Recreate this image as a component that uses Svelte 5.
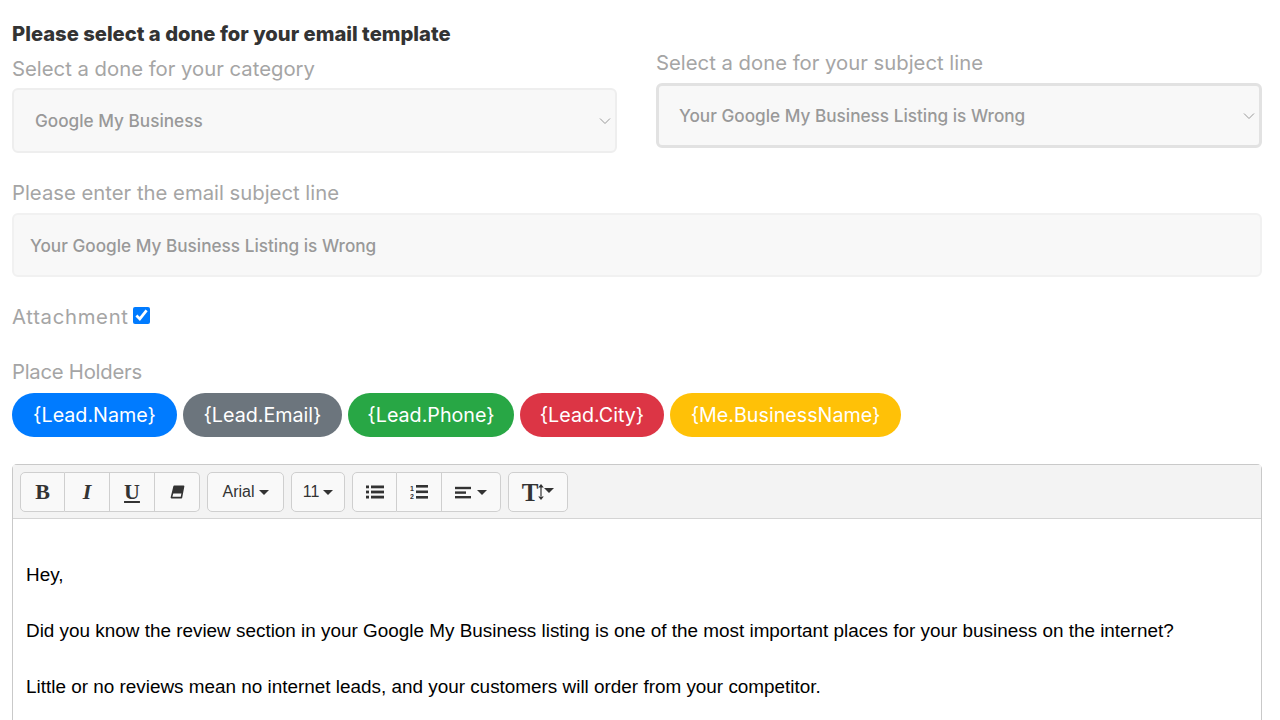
<script>
  const pills = [
    { text: '{Lead.Name}', color: 'blue' },
    { text: '{Lead.Email}', color: 'gray' },
    { text: '{Lead.Phone}', color: 'green' },
    { text: '{Lead.City}', color: 'red' },
    { text: '{Me.BusinessName}', color: 'yellow' }
  ]
  const body = [
    'Hey,',
    'Did you know the review section in your Google My Business listing is one of the most important places for your business on the internet?',
    'Little or no reviews mean no internet leads, and your customers will order from your competitor.'
  ]
</script>

<div class="page">
  <div class="selects">
    <div class="col">
      <h1>Please select a done for your email template</h1>
      <div class="label">Select a done for your category</div>
      <div class="select">
        <span>Google My Business</span>
        <svg width="12" height="8" viewBox="0 0 12 8"><path d="M1 1.5l5 5 5-5" fill="none" stroke="#999" stroke-width="1"/></svg>
      </div>
    </div>
    <div class="col right">
      <div class="label">Select a done for your subject line</div>
      <div class="select focused">
        <span>Your Google My Business Listing is Wrong</span>
        <svg width="12" height="8" viewBox="0 0 12 8"><path d="M1 1.5l5 5 5-5" fill="none" stroke="#999" stroke-width="1"/></svg>
      </div>
    </div>
  </div>

  <div class="label subject">Please enter the email subject line</div>
  <input class="text" type="text" value="Your Google My Business Listing is Wrong" />

  <div class="attach">
    <span class="label">Attachment</span>
    <input type="checkbox" checked />
  </div>

  <div class="label holders">Place Holders</div>
  <div class="pills">
    {#each pills as pill}
      <span class="pill {pill.color}">{pill.text}</span>
    {/each}
  </div>

  <div class="editor">
    <div class="toolbar">
      <div class="group">
        <button class="b"><b>B</b></button>
        <button class="b"><b><i>I</i></b></button>
        <button class="b"><b><u>U</u></b></button>
        <button class="b">
          <svg width="15" height="14" viewBox="0 0 15 14"><path d="M4.2 1.2h9.4L12 8.4H2.6z" fill="#333"/><path d="M4.2 1.2h9.4L11.4 12.6H1.4z" fill="none" stroke="#333" stroke-width="1.6" stroke-linejoin="round"/></svg>
        </button>
      </div>
      <div class="group"><button class="drop name">Arial<span class="caret"></span></button></div>
      <div class="group"><button class="drop size">11<span class="caret"></span></button></div>
      <div class="group">
        <button class="b">
          <svg width="18" height="14" viewBox="0 0 18 14" fill="#333"><rect x="0" y="0.5" width="3" height="2.8"/><rect x="5" y="0.5" width="13" height="2.8"/><rect x="0" y="5.6" width="3" height="2.8"/><rect x="5" y="5.6" width="13" height="2.8"/><rect x="0" y="10.7" width="3" height="2.8"/><rect x="5" y="10.7" width="13" height="2.8"/></svg>
        </button>
        <button class="b">
          <svg width="18" height="16" viewBox="0 0 18 16" fill="#333"><rect x="6" y="1" width="12" height="2.6"/><rect x="6" y="6.5" width="12" height="2.6"/><rect x="6" y="12" width="12" height="2.6"/><text x="0" y="6.5" class="num">1</text><text x="0" y="15" class="num">2</text></svg>
        </button>
        <button class="b wide">
          <svg width="17" height="13" viewBox="0 0 17 13" fill="#333"><rect x="0" y="0.8" width="16" height="2.4"/><rect x="0" y="5.4" width="11" height="2.4"/><rect x="0" y="10" width="16" height="2.4"/></svg>
          <span class="caret"></span>
        </button>
      </div>
      <div class="group">
        <button class="b height"><b>T</b><svg width="6" height="16" viewBox="0 0 6 16" fill="#333"><path d="M3 0l2.8 3.6H.2zM3 16l2.8-3.6H.2zM2.4 3h1.2v10H2.4z"/></svg><span class="caret tight"></span></button>
      </div>
    </div>
    <div class="content">
      {#each body as line}
        <p>{line}</p>
      {/each}
    </div>
  </div>
</div>

<style>
  :global(body) {
    background: #fff;
    overflow: hidden;
  }
  .page {
    height: 720px;
    overflow: hidden;
    box-sizing: border-box;
    padding: 22px 18px 0 12px;
    font-family: Inter, "Open Sans", sans-serif;
  }
  .selects {
    display: grid;
    grid-template-columns: 605px 606px;
    column-gap: 39px;
  }
  .right {
    padding-top: 29px;
  }
  h1 {
    margin: 0 0 11px;
    font-size: 20.2px;
    line-height: 24px;
    font-weight: 800;
    color: #333;
    white-space: nowrap;
  }
  .label {
    font-size: 20.3px;
    line-height: 24px;
    color: #a5a5a5;
  }
  .select {
    box-sizing: border-box;
    height: 65px;
    margin-top: 7px;
    padding: 0 4px 0 21px;
    display: flex;
    align-items: center;
    justify-content: space-between;
    background: #f8f8f8;
    border: 2px solid #eee;
    border-radius: 6px;
    font-size: 17.2px;
    font-weight: 500;
    color: #999;
  }
  .select.focused {
    margin-top: 8px;
    height: 65px;
    border: 3px solid #e2e2e2;
    padding-left: 20px;
    padding-right: 4px;
  }
  .subject {
    margin-top: 28px;
  }
  .text {
    display: block;
    box-sizing: border-box;
    width: 100%;
    height: 64px;
    margin-top: 8px;
    padding: 0 16px;
    background: #f8f8f8;
    border: 2px solid #f1f1f1;
    border-radius: 6px;
    font: 500 17.2px Inter, "Open Sans", sans-serif;
    color: #999;
    outline: none;
  }
  .attach {
    display: flex;
    align-items: center;
    gap: 4px;
    margin-top: 28px;
  }
  .attach .label {
    letter-spacing: 0.7px;
  }
  .attach input {
    width: 17px;
    height: 17px;
    margin: 0 0 3px;
    accent-color: #007bff;
  }
  .holders {
    margin-top: 31px;
    letter-spacing: -0.25px;
  }
  .pills {
    display: flex;
    gap: 6px;
    margin-top: 9px;
  }
  .pill {
    box-sizing: border-box;
    height: 44px;
    display: flex;
    align-items: center;
    justify-content: center;
    border-radius: 22px;
    font-size: 19.7px;
    color: #fff;
    white-space: nowrap;
  }
  .blue { width: 165px; background: #007bff; }
  .gray { width: 159px; background: #6c757d; }
  .green { width: 166px; background: #28a745; }
  .red { width: 144px; background: #dc3545; }
  .yellow { width: 231px; background: #ffc107; }
  .editor {
    margin-top: 27px;
    border: 1px solid #c9c9c9;
    border-bottom: none;
    border-radius: 5px 5px 0 0;
    font-family: "Liberation Sans", Arial, sans-serif;
    color: #000;
  }
  .toolbar {
    display: flex;
    gap: 7px;
    height: 54px;
    box-sizing: border-box;
    padding: 7px 7px 0;
    background: #f3f3f3;
    border-bottom: 1px solid #d4d4d4;
  }
  .group {
    display: flex;
    height: 40px;
  }
  button {
    box-sizing: border-box;
    height: 40px;
    padding: 0;
    display: flex;
    align-items: center;
    justify-content: center;
    background: #f9f9f9;
    border: 1px solid #cfcfcf;
    border-left-width: 0;
    color: #333;
    font-family: "Liberation Sans", Arial, sans-serif;
    font-size: 16px;
  }
  button:first-child {
    border-left-width: 1px;
    border-radius: 5px 0 0 5px;
  }
  button:last-child {
    border-radius: 0 5px 5px 0;
  }
  button:only-child {
    border-radius: 5px;
  }
  .b {
    width: 45px;
    font-family: "Liberation Serif", serif;
    font-size: 22px;
  }
  .b.wide {
    width: 59px;
    gap: 5px;
  }
  .drop.name {
    width: 77px;
  }
  .drop.size {
    width: 54px;
  }
  .b.height {
    width: 60px;
    font-size: 25px;
    line-height: 1;
  }
  .caret {
    width: 0;
    height: 0;
    margin-left: 4px;
    border-top: 5px solid #333;
    border-left: 5px solid transparent;
    border-right: 5px solid transparent;
  }
  .b.wide .caret {
    margin-left: 0;
  }
  .caret.tight {
    margin-left: 0;
    margin-bottom: 3px;
  }
  .num {
    font: 700 7px "Liberation Sans", sans-serif;
  }
  .content {
    padding: 42px 13px 0;
    background: #fff;
    height: 300px;
  }
  p {
    margin: 0 0 28px;
    font-size: 18.9px;
    line-height: 28px;
    white-space: nowrap;
  }
</style>
